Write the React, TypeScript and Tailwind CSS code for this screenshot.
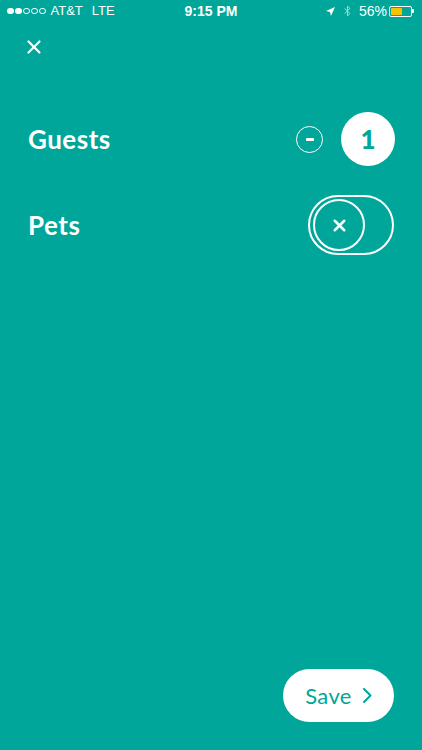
import { X } from 'lucide-react';

function StatusBar() {
  return (
    <div className="relative h-[22px] flex items-center pl-[7px] pr-[8px] text-white text-[14px] font-['Liberation_Sans',sans-serif]">
      <div className="flex items-center gap-[1.5px]">
        <span className="w-[6.5px] h-[6.5px] rounded-full bg-white" />
        <span className="w-[6.5px] h-[6.5px] rounded-full bg-white" />
        <span className="w-[6.5px] h-[6.5px] rounded-full border border-white" />
        <span className="w-[6.5px] h-[6.5px] rounded-full border border-white" />
        <span className="w-[6.5px] h-[6.5px] rounded-full border border-white" />
      </div>
      <span className="ml-[5px] text-[13px]">AT&amp;T</span>
      <span className="ml-[9px] text-[13px]">LTE</span>
      <span className="absolute left-1/2 -translate-x-1/2 font-bold">9:15 PM</span>
      <div className="ml-auto flex items-center">
        <svg width="9" height="9" viewBox="0 0 10 10" className="mr-[9px]">
          <path d="M10 0 L0 4.5 L4.5 5.5 L5.5 10 Z" fill="white" />
        </svg>
        <svg width="7" height="12" viewBox="0 0 7 12" className="mr-[8px] opacity-60">
          <path d="M0.5 3.5 L6 8.5 L3.5 11 L3.5 1 L6 3.5 L0.5 8.5" fill="none" stroke="white" strokeWidth="1" />
        </svg>
        <span>56%</span>
        <div className="ml-[2px] flex items-center">
          <div className="w-[23px] h-[11px] rounded-[2px] border border-white p-[1px]">
            <div className="h-full w-[11px] bg-[#f5c400] rounded-[1px]" />
          </div>
          <div className="w-[2px] h-[4px] bg-white rounded-r-[1px]" />
        </div>
      </div>
    </div>
  );
}

export default function App() {
  return (
    <div className="w-[422px] h-[750px] bg-[#00a699] flex flex-col font-['Lato',sans-serif]">
      <StatusBar />

      {/* close */}
      <div className="pt-[14px] pl-[23px]">
        <X className="w-[22px] h-[22px] text-white" strokeWidth={2.4} />
      </div>

      {/* rows */}
      <div className="mt-[54px] px-[28px] flex flex-col gap-[29px]">
        <div className="h-[54px] flex items-center justify-between">
          <span className="text-white text-[26px] font-bold tracking-[0.5px]">Guests</span>
          <div className="flex items-center gap-[18px] -mr-[1px]">
            <div className="w-[27px] h-[27px] rounded-full border-[1.5px] border-white flex items-center justify-center">
              <div className="w-[8px] h-[3px] bg-white rounded-[1px]" />
            </div>
            <div className="w-[54px] h-[54px] rounded-full bg-white flex items-center justify-center">
              <span className="text-[#00a699] text-[26px] font-black">1</span>
            </div>
          </div>
        </div>

        <div className="h-[60px] flex items-center justify-between">
          <span className="text-white text-[26px] font-bold tracking-[0.5px]">Pets</span>
          <div className="w-[86px] h-[60px] rounded-full border-2 border-white flex items-center pl-[3px]">
            <div className="w-[52px] h-[52px] rounded-full border-2 border-white flex items-center justify-center">
              <X className="w-[19px] h-[19px] text-white" strokeWidth={3.2} />
            </div>
          </div>
        </div>
      </div>

      <div className="flex-1" />

      {/* save */}
      <div className="flex justify-end pr-[28px] pb-[28px]">
        <button className="w-[111px] h-[53px] rounded-full bg-white flex items-center justify-center gap-[11px] text-[#00a699]">
          <span className="text-[22px] tracking-[0.4px]">Save</span>
          <svg width="9" height="15" viewBox="0 0 9 15" fill="none">
            <path d="M1 1 L7.5 7.5 L1 14" stroke="#00a699" strokeWidth="2" strokeLinecap="round" strokeLinejoin="round" />
          </svg>
        </button>
      </div>
    </div>
  );
}
